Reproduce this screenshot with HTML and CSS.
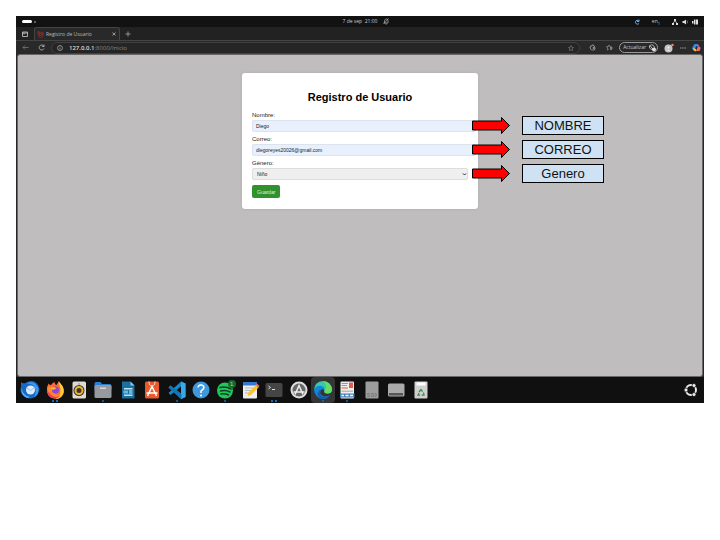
FILE: index.html
```html
<!DOCTYPE html>
<html lang="es">
<head>
<meta charset="utf-8">
<title>Registro de Usuario</title>
<link rel="stylesheet" href="styles.css">
</head>
<body>
<main class="desktop">
  <header class="system-bar">
    <div class="workspaces"><span class="pill"></span><span class="dot"></span></div>
    <div class="clock"><time>7 de sep&nbsp; 21:00</time>
      <svg width="6" height="7" viewBox="0 0 12 14" fill="none" stroke="#aaa" stroke-width="1.5"><path d="M2 10 3 8V5q1-3 4-3t3 3v5ZM5 12h3M1 12 11 1"/></svg>
    </div>
    <div class="tray">
      <svg width="6" height="6" viewBox="0 0 12 12" fill="none" stroke="#6aaee8" stroke-width="2"><path d="M9 3A4 4 0 1 0 10 9M10 1v4H6"/></svg>
      <span class="lang">en<sub>1</sub></span>
      <svg width="6" height="6" viewBox="0 0 12 12" fill="#ddd"><path d="M4 0h4v4H4zM0 8h4v4H0zM8 8h4v4H8z"/><path d="M6 3 2 9M6 3l4 6" stroke="#ddd" stroke-width="1.5"/></svg>
      <svg width="6" height="6" viewBox="0 0 12 12" fill="#ddd"><path d="M1 4h3l4-3v10L4 8H1z"/><path d="M10 3q2 3 0 6" fill="none" stroke="#888" stroke-width="1.5"/></svg>
      <svg width="6" height="6" viewBox="0 0 12 12" fill="#ddd"><path d="M0 4h3v5H0zM4 1h3v10H4zM8 1h4v10H8z"/></svg>
    </div>
  </header>
  <nav class="tab-bar" aria-label="Pestañas">
    <button class="icon-button tab-actions" aria-label="Acciones de pestañas"><svg width="6" height="6" viewBox="0 0 12 12" fill="none" stroke="#ccc" stroke-width="1.6"><path d="M1 2h10v9H1zM1 4h10M4 4v3"/></svg></button>
    <div class="tab">
      <svg width="7" height="7" viewBox="0 0 14 14" fill="none" stroke="#a82c2c" stroke-width="1.5"><path d="m1 2 3-1 2 8 5-2-3-4 3-1 2 3-3 1M1 2l3 9 3 2 5-3V6M4 6l4-2"/></svg>
      <span>Registro de Usuario</span>
      <button class="icon-button" aria-label="Cerrar"><svg width="4" height="4" viewBox="0 0 8 8" stroke="#bbb" stroke-width="1.5"><path d="m1 1 6 6M7 1 1 7"/></svg></button>
    </div>
    <button class="icon-button new-tab" aria-label="Nueva pestaña"><svg width="6" height="6" viewBox="0 0 12 12" stroke="#aaa" stroke-width="1.6"><path d="M6 1v10M1 6h10"/></svg></button>
  </nav>
  <div class="toolbar">
    <button class="icon-button" aria-label="Atrás"><svg width="7" height="7" viewBox="0 0 14 14" fill="none" stroke="#777" stroke-width="1.6"><path d="M13 7H2M6 3 2 7l4 4"/></svg></button>
    <button class="icon-button" aria-label="Actualizar página"><svg width="7" height="7" viewBox="0 0 14 14" fill="none" stroke="#bbb" stroke-width="1.6"><path d="M12 5A5 5 0 1 0 12 9M12 1v4H8"/></svg></button>
    <div class="address">
      <svg width="6" height="6" viewBox="0 0 12 12" fill="none" stroke="#bbb" stroke-width="1.3"><circle cx="6" cy="6" r="5"/><path d="M6 5v4M6 3v1"/></svg>
      <span class="url"><b>127.0.0.1</b>:8000/Inicio</span>
      <svg width="6" height="6" viewBox="0 0 12 12" fill="none" stroke="#888" stroke-width="1.2"><path d="m6 1 1.5 3.5L11 5 8.500 7.500 9 11 6 9.500 3 11l.5-3.500L1 5l3.500-.5z"/></svg>
    </div>
    <div class="tools">
      <button class="icon-button" aria-label="Extensiones"><svg width="7" height="7" viewBox="0 0 14 14" fill="none" stroke="#aaa" stroke-width="1.4"><path d="M3 4h3V2h3v2h2v3h1v3h-1v2H5l-2-2V8H2V6h1z"/><path d="M11 7H8v2h3"/></svg></button>
      <button class="icon-button favorites" aria-label="Favoritos"><svg width="7" height="7" viewBox="0 0 14 14" fill="none" stroke="#aaa" stroke-width="1.3"><path d="m6 2 1.500 3L11 5.500M5 11l-2 1 .5-4L1 5.500 4.500 5 6 2M8 7h5M8 9h5M8 11h4"/></svg></button>
      <button class="update">Actualizar
        <svg width="8" height="8" viewBox="0 0 16 16"><path d="M3 4q4-5 8-1l2 4-4 5-6-4z" fill="none" stroke="#aaa" stroke-width="2"/><path d="m3 2 9 11" stroke="#bbb" stroke-width="2"/><circle cx="12" cy="11" r="4" fill="#ddd"/></svg>
      </button>
      <button class="icon-button" aria-label="Perfil"><svg width="10" height="10" viewBox="0 0 20 20"><circle cx="9" cy="11" r="8" fill="#c9c7c4"/><circle cx="9" cy="9" r="3" fill="#eee" stroke="#aaa"/><path d="M4 16q5-6 10 0" fill="#eee" stroke="#aaa"/><circle cx="17" cy="4" r="2.500" fill="#ee8579"/></svg></button>
      <button class="icon-button" aria-label="Más"><svg width="6" height="6" viewBox="0 0 12 12" fill="#999"><path d="M0 5h3v2H0zM4.500 5h3v2h-3zM9 5h3v2H9z"/></svg></button>
      <button class="icon-button" aria-label="Copilot"><svg width="9" height="9" viewBox="0 0 18 18"><path d="M5 2h6q2 0 3 4l-6 3-5 5q-4-1-2-6z" fill="#3489e5"/><path d="m11 2 3 5q4 0 3 5l-2 4H8l3-7z" fill="#d654a3"/><path d="M3 10q5 0 6 6-5 2-7-4z" fill="#f3c43b"/><path d="m9 16 3-9 4 3-2 6z" fill="#ef725d"/><path d="m8 7 3-1-1 5H7z" fill="#24272a"/></svg></button>
    </div>
  </div>
  <section class="viewport">
    <form class="card">
      <h1>Registro de Usuario</h1>
      <label for="nombre">Nombre:</label>
      <input id="nombre" type="text" value="Diego">
      <label for="correo">Correo:</label>
      <input id="correo" type="email" value="diegoreyes20026@gmail.com">
      <label for="genero">Género:</label>
      <div class="select-wrap">
        <select id="genero"><option>Niño</option><option>Niña</option></select>
        <svg class="chevron" width="5" height="5" viewBox="0 0 10 10" fill="none" stroke="#222" stroke-width="2"><path d="m2 3 3 3 3-3"/></svg>
      </div>
      <button class="save" type="button">Guardar</button>
    </form>
    <div class="annotations">
      <svg class="arrow" viewBox="0 0 39 19"><path d="M.5 5h29V1.500l8 8-8 8V14H.5z"/></svg><span class="note">NOMBRE</span>
      <svg class="arrow" viewBox="0 0 39 19"><path d="M.5 5h29V1.500l8 8-8 8V14H.5z"/></svg><span class="note">CORREO</span>
      <svg class="arrow" viewBox="0 0 39 19"><path d="M.5 5h29V1.500l8 8-8 8V14H.5z"/></svg><span class="note">Genero</span>
    </div>
  </section>
  <footer class="dock">
    <ul class="apps">
      <li><svg viewBox="0 0 40 40"><path d="M2 4q4 4 9 2Q24-2 34 7q9 11 1 22-10 12-23 6Q-2 28 2 14z" fill="#1769c4"/><path d="M12 7Q28-1 36 15q3 13-8 20 8-15-2-25-5-4-14-3z" fill="#3d9af0"/><ellipse cx="21" cy="20" rx="9" ry="9" fill="#dcecfb"/><path d="m13 15 8 6 8-6" fill="none" stroke="#8fc1ee" stroke-width="2"/><path d="M3 16q3 16 17 18l-6 2Q1 31 3 16" fill="#56b5fb"/></svg></li>
      <li class="running two"><svg viewBox="0 0 40 40"><path d="M7 7q2 3 5 3 3-5 8-6-2 4 3 6l5-8q3 7 7 10 5 10 1 17-6 9-17 8Q5 36 4 21 3 14 7 7z" fill="#ff6936"/><path d="M27 3q13 11 10 23-4 12-16 12 11-8 10-20z" fill="#ffcf35"/><path d="M5 15q-3 17 12 21 14 0 15-10-7 7-14 1-5-5 0-9-8 1-8-6z" fill="#ff8b28"/><path d="M4 20q0 14 14 17 8 0 12-5-14 5-23-8z" fill="#f43c62"/><circle cx="21" cy="20" r="7" fill="#8b45d9"/><path d="M10 16q8-4 13 1l-7 3z" fill="#ffae2c"/></svg></li>
      <li><svg viewBox="0 0 40 40"><rect x="7" y="3" width="27" height="34" rx="3" fill="#dedbd2"/><circle cx="20" cy="21" r="11" fill="#373635"/><circle cx="20" cy="21" r="7" fill="none" stroke="#f1b429" stroke-width="4"/><circle cx="20" cy="8" r="2" fill="#aaa"/></svg></li>
      <li class="running"><svg viewBox="0 0 40 40"><path d="M3 7q0-3 3-3h9l3 4h15q4 0 4 4v7H3z" fill="#2780d7"/><rect x="3" y="10" width="34" height="26" rx="3" fill="#96999d"/><path d="M14 15h12v3H14z" fill="#d5d5d5"/></svg></li>
      <li><svg viewBox="0 0 40 40"><path d="M8 3h17l8 8v26H8z" fill="#1b6f9e"/><path d="m25 3 8 8h-8z" fill="#7ec9ed"/><path d="M12 16h17v3H12zM12 29h17v3H12z" fill="#b8e4f7"/><path d="M11 21h9v6h-9z" fill="#6bb8df"/><path d="M22 21h7v2h-7zM22 25h7v2h-7z" fill="#d0effa"/></svg></li>
      <li><svg viewBox="0 0 40 40"><rect x="6" y="3" width="28" height="34" rx="3" fill="#e65b2c"/><path d="M14 3q0 9 6 9t6-9" fill="none" stroke="#ffe0d3" stroke-width="2"/><path d="m11 32 9-19 9 19M9 26h22" fill="none" stroke="#fff" stroke-width="3"/></svg></li>
      <li class="running"><svg viewBox="0 0 40 40"><path d="m28 3 9 4v27l-9 4L3 15l4-4 22 17V12L7 30l-4-4z" fill="#1986c9"/><path d="m28 3 9 4v27l-9 4z" fill="#36a8eb"/><path d="m3 15 4-4 22 17v8z" fill="#1672b3"/></svg></li>
      <li><svg viewBox="0 0 40 40"><circle cx="20" cy="20" r="17" fill="#3f97dd"/><path d="M14 15q1-6 7-5 7 2 4 7-2 3-5 5v4" fill="none" stroke="#fff" stroke-width="3"/><circle cx="20" cy="31" r="2" fill="#fff"/></svg></li>
      <li class="running"><svg viewBox="0 0 40 40"><circle cx="20" cy="21" r="16" fill="#20c75a"/><path d="M10 15q12-3 22 3M11 22q10-3 19 2M12 28q8-2 15 2" fill="none" stroke="#143e23" stroke-width="3" stroke-linecap="round"/></svg><span class="badge">1</span></li>
      <li><svg viewBox="0 0 40 40"><rect x="6" y="4" width="28" height="33" rx="2" fill="#eee"/><path d="M6 4h28v7H6z" fill="#3379d1"/><path d="M10 16h17M10 21h13M10 26h9" stroke="#bbb" stroke-width="2"/><path d="m15 32 2-7 15-15 5 5-15 15z" fill="#f7c52f"/><path d="m32 10 5 5 2-3-5-5z" fill="#e96a68"/></svg></li>
      <li class="running two"><svg viewBox="0 0 40 40"><rect x="3" y="6" width="34" height="28" rx="3" fill="#454545"/><path d="m9 12 4 3-4 3M16 19h6" fill="none" stroke="#ddd" stroke-width="2"/></svg></li>
      <li><svg viewBox="0 0 40 40"><circle cx="20" cy="20" r="17" fill="#dedede"/><circle cx="20" cy="20" r="13" fill="#686868"/><path d="m12 29 8-18 8 18M9 24h22" fill="none" stroke="#eee" stroke-width="3"/></svg></li>
      <li class="running active"><svg viewBox="0 0 40 40"><path d="M2 20Q3 3 20 2q15 1 18 16 0 9-9 9-8 0-6-6-2-8-12-6Q4 16 2 20" fill="#36c9aa"/><path d="M20 2q15 1 18 16 0 9-9 9-8 0-6-6 8-9-3-19" fill="#65df63"/><path d="M2 20q4-10 15-8 7 2 6 9-5-5-8 0-3 9 7 12 7 1 12-3-6 9-16 8Q4 35 2 20" fill="#1685dd"/><path d="M15 19q-5 12 7 15 6 0 12-4-8 11-20 7-11-9 1-18" fill="#145fad"/></svg></li>
      <li class="running"><svg viewBox="0 0 40 40"><rect x="7" y="3" width="27" height="34" rx="2" fill="#eee"/><path d="M9 7h13M9 11h11" stroke="#999" stroke-width="2"/><path d="M24 5h8v11h-8zM9 15h13v2H9z" fill="#e85b48"/><path d="M9 21h23v3H9z" fill="#bbb"/><rect x="6" y="27" width="29" height="8" fill="#4780bd"/><path d="M9 31h5M17 31h6M26 31h6" stroke="#fff" stroke-width="3"/></svg></li>
      <li><svg viewBox="0 0 40 40"><rect x="7" y="3" width="26" height="34" rx="2" fill="#9d9d9d"/><path d="M16 27h-5v3h4v3h-5M24 27h-5v3h4v3h-5M26 27h2q3 3 0 6h-2z" fill="none" stroke="#777" stroke-width="1.500"/></svg></li>
      <li><svg viewBox="0 0 40 40"><rect x="4" y="7" width="33" height="26" rx="3" fill="#aaa"/><path d="M6 26h28v5H6z" fill="#555"/></svg></li>
      <li><svg viewBox="0 0 40 40"><rect x="7" y="3" width="26" height="34" rx="2" fill="#d0d0d0"/><path d="M11 5h18v6H11z" fill="#fff"/><path d="m16 24 4-5 3 4M25 25l1 5h-5M18 30h-4l2-4" fill="none" stroke="#359044" stroke-width="2.500"/></svg></li>
    </ul>
    <button class="icon-button launcher" aria-label="Mostrar aplicaciones"><svg width="14" height="14" viewBox="0 0 28 28"><circle cx="14" cy="14" r="10" fill="none" stroke="#eee" stroke-width="4"/><g fill="#eee" stroke="#101010" stroke-width="1.500"><circle cx="4" cy="14" r="4"/><circle cx="20" cy="5" r="4"/><circle cx="20" cy="23" r="4"/></g></svg></button>
  </footer>
</main>
</body>
</html>
```
FILE: styles.css
```css
* { box-sizing: border-box; }
body { margin: 16px; background: #fff; font-family: "Liberation Sans", Arial, sans-serif; }
svg { display: block; flex: none; }
.desktop { display: flex; flex-direction: column; aspect-ratio: 16 / 9; background: #262626; }
button { font-family: inherit; }
.icon-button { display: flex; align-items: center; justify-content: center; padding: 0; border: 0; background: none; }

.system-bar { display: grid; grid-template-columns: 1fr auto 1fr; align-items: center; height: 11px; padding: 0 6px; background: #121212; color: #ccc; font: 5px/11px "Open Sans", "Noto Sans", sans-serif; }
.workspaces { display: flex; align-items: center; gap: 2px; }
.pill { width: 10px; height: 3px; border-radius: 2px; background: #fff; }
.dot { width: 2px; height: 2px; border-radius: 50%; background: #777; }
.clock { display: flex; align-items: center; gap: 6px; padding-left: 12px; }
.tray { display: flex; align-items: center; justify-content: flex-end; gap: 4px; }
.lang { margin: 0 8px; }
.lang sub { font-size: 4px; line-height: 1; }

.tab-bar { display: flex; align-items: center; height: 13px; background: #222; color: #bbb; font: 5px/13px "Open Sans", "Noto Sans", sans-serif; }
.tab-actions { width: 18px; }
.tab { display: flex; align-items: center; gap: 2px; width: 86px; height: 13px; padding: 0 3px 0 2px; border: 1px solid #444; border-bottom: 0; border-radius: 3px 3px 0 0; background: #292929; }
.tab span { flex: 1; white-space: nowrap; }
.new-tab { width: 16px; }

.toolbar { display: flex; align-items: center; gap: 9px; height: 14px; padding: 0 3px 0 6px; border-top: 1px solid #444; background: #292929; color: #aaa; font: 6px/12px "Open Sans", "Noto Sans", sans-serif; }
.address { display: flex; flex: 1; align-items: center; gap: 6px; height: 12px; margin-left: -3px; padding: 0 5px; border: 1px solid #404040; border-radius: 6px; background: #252525; }
.url { flex: 1; color: #888; }
.url b { color: #ddd; font-weight: 600; }
.tools { display: flex; align-items: center; gap: 6px; }
.favorites { margin-left: 4px; }
.update { display: flex; align-items: center; gap: 2px; height: 11px; padding: 0 1px 0 3px; border: 1px solid #999; border-radius: 6px; background: #292929; color: #ccc; font: 5px/9px "Open Sans", sans-serif; }

.viewport { position: relative; flex: 1; margin: 0 1px; padding: 18px 10px; border: 1px solid #686868; border-radius: 3px; background: #c0bdbe; }
.card { max-width: 236px; margin: 0 auto; padding: 10px 10px 11px; border-radius: 3px; background: #fff; box-shadow: 0 0 3px #aaa; color: #222; }
.card h1 { margin: 8px 0 7px; color: #000; font-size: 11px; line-height: 13px; text-align: center; }
.card label { display: block; margin-bottom: 1px; font-size: 6px; line-height: 8px; }
.card input { display: block; box-sizing: content-box; width: 100%; height: 10px; margin-bottom: 3px; padding: 0 3px; border: 1px solid #dde3ed; border-radius: 2px; background: #e8f0fe; color: #222; font: 5px/10px "Liberation Sans", Arial, sans-serif; }
.select-wrap { position: relative; }
.card select { display: block; appearance: none; width: 100%; height: 12px; padding: 0 4px; border: 1px solid #ddd; border-radius: 2px; background: #efefef; color: #222; font: 5px/10px "Liberation Sans", Arial, sans-serif; }
.chevron { position: absolute; top: 4px; right: 1px; pointer-events: none; }
.save { display: block; height: 13px; margin-top: 5px; padding: 0 5px; border: 0; border-radius: 2px; background: #2f922f; color: #dff0df; font-size: 5px; }

.annotations { position: absolute; top: 61px; left: calc(50% + 112px); display: grid; grid-template-columns: 39px 82px; column-gap: 11px; row-gap: 5px; }
.arrow { width: 39px; height: 19px; fill: #f00; stroke: #000; stroke-width: 1; }
.note { height: 19px; border: 1px solid #000; background: #cfe2f3; color: #111; font-size: 13px; line-height: 17px; text-align: center; }

.dock { display: flex; align-items: center; justify-content: space-between; height: 26px; padding: 0 6px 0 2px; background: #101010; }
.apps { display: flex; flex: 0 1 415px; margin: 0; padding: 0; list-style: none; }
.apps li { position: relative; display: flex; flex: 1; align-items: center; justify-content: center; height: 26px; }
.apps svg { width: 20px; height: 20px; }
.running::after { content: ""; position: absolute; bottom: 1px; width: 2px; height: 2px; border-radius: 50%; background: #1769c4; }
.running.two::after { width: 6px; border-radius: 0; background: linear-gradient(90deg, #1769c4 2px, transparent 2px 4px, #1769c4 4px); }
.apps .active { border-radius: 4px; background: #353535; }
.badge { position: absolute; top: 3px; right: 2px; width: 8px; height: 8px; border-radius: 50%; background: #176a2b; color: #bde5c4; font-size: 5px; line-height: 8px; text-align: center; }
```
